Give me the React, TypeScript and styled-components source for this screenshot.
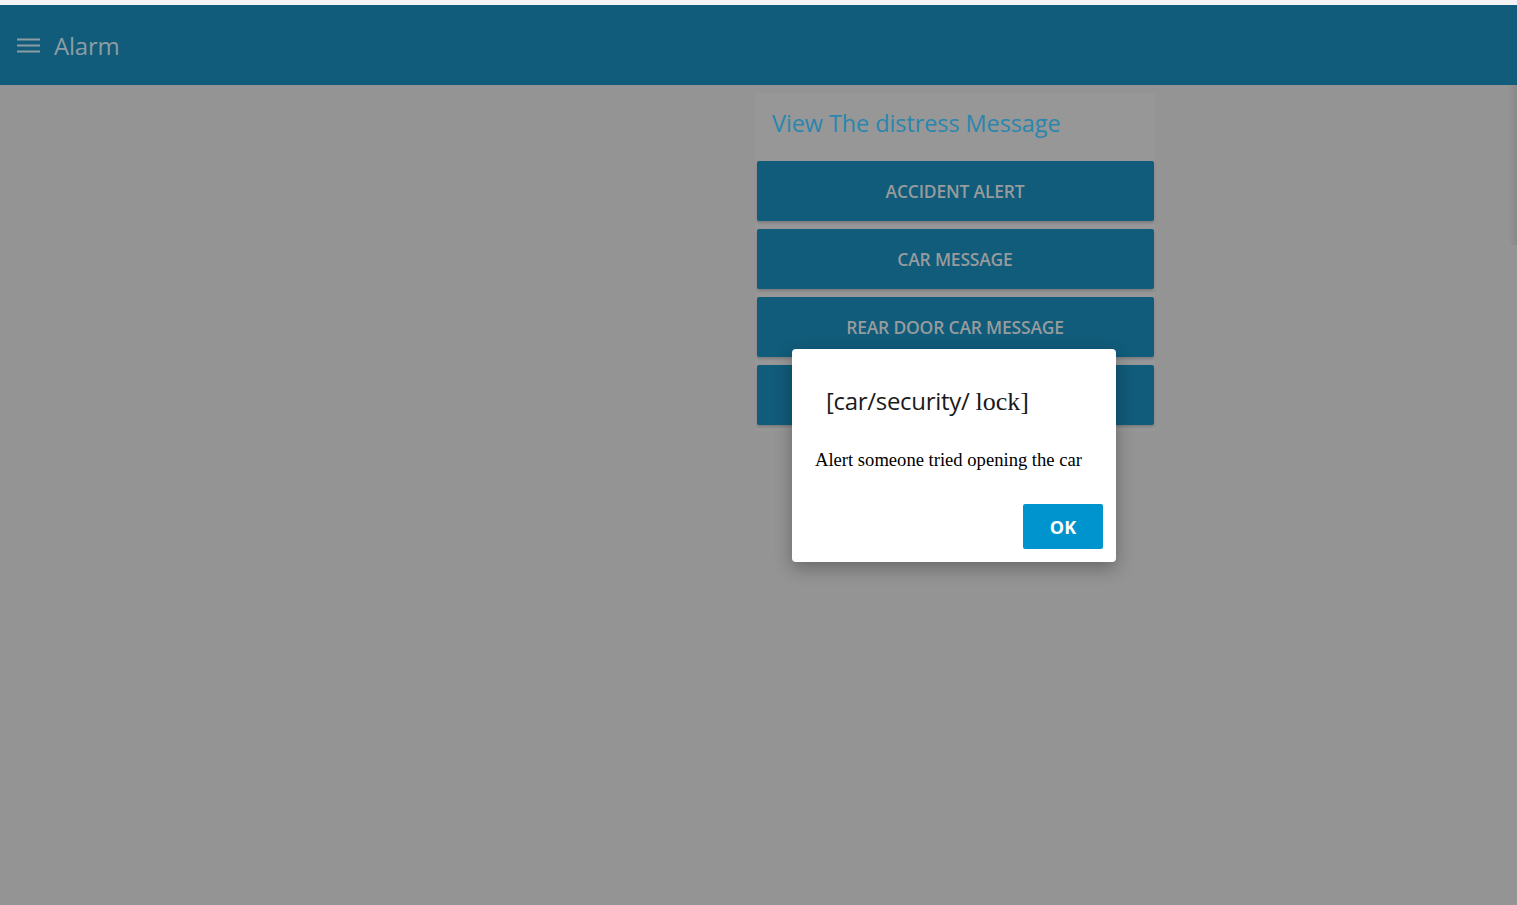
import React from "react";
import styled, { createGlobalStyle } from "styled-components";

const Global = createGlobalStyle`
  html, body { margin: 0; padding: 0; }
  body {
    background: #949494;
    font-family: "Open Sans", "Noto Sans", Arial, sans-serif;
    overflow: hidden;
  }
`;

const Page = styled.div`
  min-height: 905px;
  display: flex;
  flex-direction: column;
  background: #949494;
  position: relative;
`;

const TopStrip = styled.div`
  height: 5px;
  background: #f4f4f4;
`;

const Header = styled.header`
  height: 80px;
  background: #115c7a;
  display: flex;
  align-items: center;
  padding-left: 17px;
  gap: 13px;
`;

const Title = styled.h1`
  margin: 0;
  font-size: 24px;
  font-weight: 400;
  color: #8d9ca3;
  letter-spacing: -0.2px;
`;

const Main = styled.main`
  flex: 1;
  padding: 8px 0 0 755px;
  position: relative;
`;

const Card = styled.section`
  width: 400px;
  background: #979797;
  display: flex;
  flex-direction: column;
  align-items: center;
  gap: 8px;
  padding-bottom: 6px;
`;

const CardTitle = styled.h2`
  align-self: stretch;
  margin: 0;
  height: 60px;
  display: flex;
  align-items: center;
  padding-left: 17px;
  font-size: 23.5px;
  font-weight: 500;
  color: #2a86ad;
  letter-spacing: -0.1px;
`;

const ActionButton = styled.button`
  width: 397px;
  height: 60px;
  border: none;
  border-radius: 2px;
  background: #115c7a;
  color: #979b9d;
  font-family: inherit;
  font-size: 17.5px;
  font-weight: 600;
  letter-spacing: -0.2px;
  box-shadow: 0 2px 3px rgba(0, 0, 0, 0.18);
`;

const EdgeShade = styled.div`
  position: absolute;
  right: 0;
  top: 85px;
  width: 8px;
  height: 160px;
  background: linear-gradient(to right, rgba(0,0,0,0), rgba(0,0,0,0.08));
`;

const Dialog = styled.div`
  position: absolute;
  left: 792px;
  top: 349px;
  width: 324px;
  height: 213px;
  box-sizing: border-box;
  background: #ffffff;
  border-radius: 4px;
  box-shadow: 0 6px 18px rgba(0, 0, 0, 0.3);
  display: flex;
  flex-direction: column;
  padding: 36px 13px 13px 23px;
`;

const DialogTitle = styled.div`
  display: flex;
  align-items: baseline;
  gap: 6px;
  padding-left: 11px;
  line-height: 32px;
  color: #1a1a1a;
`;

const TitleSans = styled.span`
  font-size: 24px;
  letter-spacing: -0.3px;
`;

const TitleSerif = styled.span`
  font-family: "Liberation Serif", "Times New Roman", serif;
  font-size: 26px;
`;

const DialogBody = styled.p`
  margin: 31px 0 0 0;
  font-family: "Liberation Serif", "Times New Roman", serif;
  font-size: 18.6px;
  line-height: 22px;
  color: #000;
`;

const Actions = styled.div`
  margin-top: auto;
  display: flex;
  justify-content: flex-end;
`;

const OkButton = styled.button`
  width: 80px;
  height: 45px;
  border: none;
  border-radius: 2px;
  background: #0094cf;
  color: #ffffff;
  font-family: inherit;
  font-size: 18px;
  font-weight: 700;
`;

export default function App() {
  return (
    <>
      <Global />
      <Page>
        <TopStrip />
        <Header>
          <svg width="24" height="24" viewBox="0 0 24 24" aria-hidden>
            <path d="M0 6.5h23M0 12.5h23M0 18.5h23" stroke="#8d9ca3" strokeWidth="2.2" />
          </svg>
          <Title>Alarm</Title>
        </Header>
        <Main>
          <Card>
            <CardTitle>View The distress Message</CardTitle>
            <ActionButton>ACCIDENT ALERT</ActionButton>
            <ActionButton>CAR MESSAGE</ActionButton>
            <ActionButton>REAR DOOR CAR MESSAGE</ActionButton>
            <ActionButton>UNLOCK CAR MESSAGE</ActionButton>
          </Card>
        </Main>
        <EdgeShade />
        <Dialog role="dialog">
          <DialogTitle>
            <TitleSans>[car/security/</TitleSans>
            <TitleSerif>lock]</TitleSerif>
          </DialogTitle>
          <DialogBody>Alert someone tried opening the car</DialogBody>
          <Actions>
            <OkButton>OK</OkButton>
          </Actions>
        </Dialog>
      </Page>
    </>
  );
}
